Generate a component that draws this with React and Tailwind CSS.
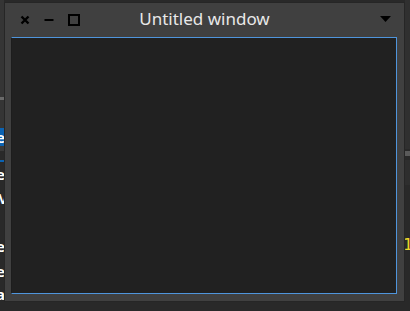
import React from 'react';

const FONT = { fontFamily: '"Noto Sans", "Open Sans", sans-serif' };

// a letter of the list that sits behind the window, cut by the left edge
function Peek({ ch, className = '' }) {
  return (
    <div className={`h-[18px] overflow-hidden text-white text-[15px] leading-[18px] font-bold ${className}`}>
      <span className="relative -left-[4px]">{ch}</span>
    </div>
  );
}

export default function App() {
  return (
    <div className="flex w-[410px] h-[311px] overflow-hidden bg-[#292929]" style={FONT}>
      {/* left scraps of the desktop */}
      <div className="w-[4px] shrink-0 flex flex-col">
        <div className="h-[97px] bg-[#353535]" />
        <div className="h-[3px] bg-[#6a6a6a]" />
        <div className="h-[28px] bg-[#353535]" />
        <Peek ch="e" className="bg-[#0b63b3]" />
        <div className="h-[5px] bg-[#3a3a3a]" />
        <div className="h-[9px]" />
        <div className="h-[2px] bg-[#0b63b3]" />
        <div className="h-[3px]" />
        <Peek ch="e" />
        <div className="h-[6px]" />
        <Peek ch="M" />
        <div className="h-[30px]" />
        <Peek ch="e" />
        <div className="h-[7px]" />
        <Peek ch="e" />
        <div className="h-[5px]" />
        <Peek ch="a" />
      </div>

      {/* the window */}
      <div className="mt-[2px] w-[401px] h-[300px] shrink-0 border border-[#262626] bg-[#404040] flex flex-col">
        <div className="h-[34px] flex items-center shrink-0 pl-[15px] pr-[13px]">
          <div className="flex-1 flex items-center gap-[14px]">
            <svg width="10" height="10" viewBox="0 0 10 10">
              <path d="M1.5 1.5 L8.5 8.5 M8.5 1.5 L1.5 8.5" stroke="#000" strokeWidth="2.4" />
            </svg>
            <svg width="10" height="10" viewBox="0 0 10 10">
              <rect x="0.5" y="4" width="9" height="2" fill="#000" />
            </svg>
            <svg width="12" height="12" viewBox="0 0 12 12">
              <rect x="1" y="1" width="10" height="10" fill="none" stroke="#000" strokeWidth="2" />
            </svg>
          </div>
          <div className="pb-[2px] pr-[2px] text-[#e8e8e8] text-[17px] whitespace-nowrap">Untitled window</div>
          <div className="flex-1 flex justify-end">
            <svg className="-mt-[3px]" width="11" height="6" viewBox="0 0 11 6">
              <path d="M0 0 H11 L5.5 6 Z" fill="#000" />
            </svg>
          </div>
        </div>
        <div className="ml-[6px] mr-[7px] h-[257px] bg-[#212121] border border-[#4f95dc] border-l-[#1d1d1d]" />
      </div>

      {/* right scraps of the desktop */}
      <div className="w-[5px] shrink-0 flex flex-col">
        <div className="h-[149px] bg-[#303030]" />
        <div className="h-[2px]" />
        <div className="h-[5px] bg-[#5a5a5a]" />
        <div className="h-[4px]" />
        <div className="h-[25px] bg-[#2e2e2e]" />
        <div className="h-[51px]" />
        <div className="h-[18px] overflow-hidden text-[#ecd82a] text-[16px] leading-[18px]" style={{ fontFamily: '"DejaVu Sans Mono", monospace' }}>
          <span className="relative -left-[2px]">1</span>
        </div>
      </div>
    </div>
  );
}
